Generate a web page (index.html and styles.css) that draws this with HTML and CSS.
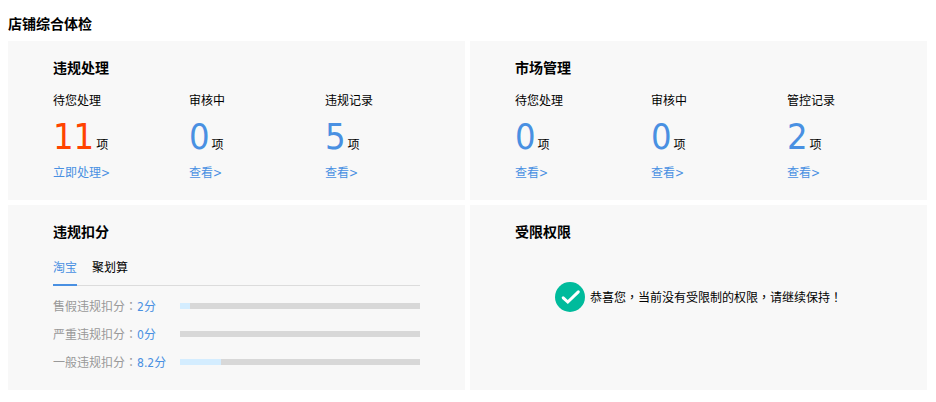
FILE: index.html
```html
<!DOCTYPE html>
<html lang="zh-CN">
<head>
    <meta charset="UTF-8">
    <meta name="viewport" content="width=device-width, initial-scale=1.0">
    <title>店铺综合体检</title>
    <link rel="stylesheet" href="styles.css">
</head>
<body>
    <h2 class="page-title">店铺综合体检</h2>
    <div class="panels">
        <section class="panel">
            <h3>违规处理</h3>
            <div class="stats">
                <div class="stat">
                    <p>待您处理</p>
                    <p class="count"><span class="num warn">11</span>项</p>
                    <a href="#">立即处理&gt;</a>
                </div>
                <div class="stat">
                    <p>审核中</p>
                    <p class="count"><span class="num">0</span>项</p>
                    <a href="#">查看&gt;</a>
                </div>
                <div class="stat">
                    <p>违规记录</p>
                    <p class="count"><span class="num">5</span>项</p>
                    <a href="#">查看&gt;</a>
                </div>
            </div>
        </section>

        <section class="panel">
            <h3>市场管理</h3>
            <div class="stats">
                <div class="stat">
                    <p>待您处理</p>
                    <p class="count"><span class="num">0</span>项</p>
                    <a href="#">查看&gt;</a>
                </div>
                <div class="stat">
                    <p>审核中</p>
                    <p class="count"><span class="num">0</span>项</p>
                    <a href="#">查看&gt;</a>
                </div>
                <div class="stat">
                    <p>管控记录</p>
                    <p class="count"><span class="num">2</span>项</p>
                    <a href="#">查看&gt;</a>
                </div>
            </div>
        </section>

        <section class="panel">
            <h3>违规扣分</h3>
            <div class="score">
                <div class="tabs">
                    <button type="button" class="tab active">淘宝</button>
                    <button type="button" class="tab">聚划算</button>
                </div>
                <!-- full bar = 48 points -->
                <div class="score-row">
                    <span class="score-label">售假违规扣分<span class="punct" lang="zh-TW">：</span><b>2分</b></span>
                    <div class="bar"><div class="bar-fill" style="width: 4.17%"></div></div>
                </div>
                <div class="score-row">
                    <span class="score-label">严重违规扣分<span class="punct" lang="zh-TW">：</span><b>0分</b></span>
                    <div class="bar"><div class="bar-fill" style="width: 0%"></div></div>
                </div>
                <div class="score-row">
                    <span class="score-label">一般违规扣分<span class="punct" lang="zh-TW">：</span><b>8.2分</b></span>
                    <div class="bar"><div class="bar-fill" style="width: 17.08%"></div></div>
                </div>
            </div>
        </section>

        <section class="panel">
            <h3>受限权限</h3>
            <div class="notice">
                <svg class="ok-icon" viewBox="0 0 30 30" aria-hidden="true">
                    <circle cx="15" cy="15" r="15" fill="#00bb9c"/>
                    <path d="M8.2 15.8l4.6 4.2L23.3 9.8" fill="none" stroke="#fff" stroke-width="3" stroke-linecap="round" stroke-linejoin="miter"/>
                </svg>
                <p>恭喜您<span class="punct" lang="zh-TW">，</span>当前没有受限制的权限<span class="punct" lang="zh-TW">，</span>请继续保持<span class="punct" lang="zh-TW">！</span></p>
            </div>
        </section>
    </div>
</body>
</html>
```
FILE: styles.css
```css
* {
    box-sizing: border-box;
}
body {
    margin: 0;
    padding: 14px 9px 12px 8px;
    background-color: #fff;
    color: #000;
    font-family: "DejaVu Sans Condensed", "Noto Sans CJK SC", sans-serif;
    font-size: 12px;
    line-height: 20px;
}
h2, h3, p {
    margin: 0;
}
h2, h3 {
    font-size: 14px;
    font-weight: bold;
}
a {
    color: #4990e2;
    text-decoration: none;
}
/* centred full-width punctuation */
.punct {
    font-family: "Noto Sans CJK TC", sans-serif;
}
.page-title {
    margin-bottom: 7px;
}
.panels {
    display: grid;
    grid-template-columns: 1fr 1fr;
    gap: 5px;
}
.panel {
    padding: 17px 0 14px 45px;
    background-color: #f8f8f8;
}

/* counters */
.stats {
    display: grid;
    grid-template-columns: repeat(3, 1fr);
    margin-top: 13px;
    padding: 0 4px 3px 0;
}
.stat a {
    display: inline-block;
}
.count {
    height: 52px;
    line-height: 52px;
}
.num {
    margin-right: 2px;
    color: #4990e2;
    font-size: 36px;
}
.num.warn {
    color: #ff4400;
}

/* score tabs and bars */
.score {
    margin-top: 16px;
    padding-right: 45px;
}
.tabs {
    display: flex;
    gap: 15px;
    margin-bottom: 6px;
    border-bottom: 1px solid #dcdcdc;
}
.tab {
    margin: 0 0 -1px;
    padding: 0 0 6px;
    border: 0;
    border-bottom: 2px solid transparent;
    background: none;
    color: #000;
    font: inherit;
    cursor: pointer;
}
.tab.active {
    border-bottom-color: #4990e2;
    color: #4990e2;
}
.score-row {
    display: flex;
    align-items: center;
    height: 28px;
}
.score-label {
    flex: 0 0 127px;
    color: #999;
}
.score-label b {
    color: #4990e2;
    font-weight: normal;
}
.bar {
    flex: 1;
    height: 6px;
    background-color: #d8d8d8;
}
.bar-fill {
    height: 100%;
    background-color: #d4edff;
}

/* no restrictions message */
.notice {
    display: flex;
    align-items: center;
    gap: 5px;
    margin: 40px 0 0 40px;
}
.ok-icon {
    width: 30px;
    height: 30px;
}
```
